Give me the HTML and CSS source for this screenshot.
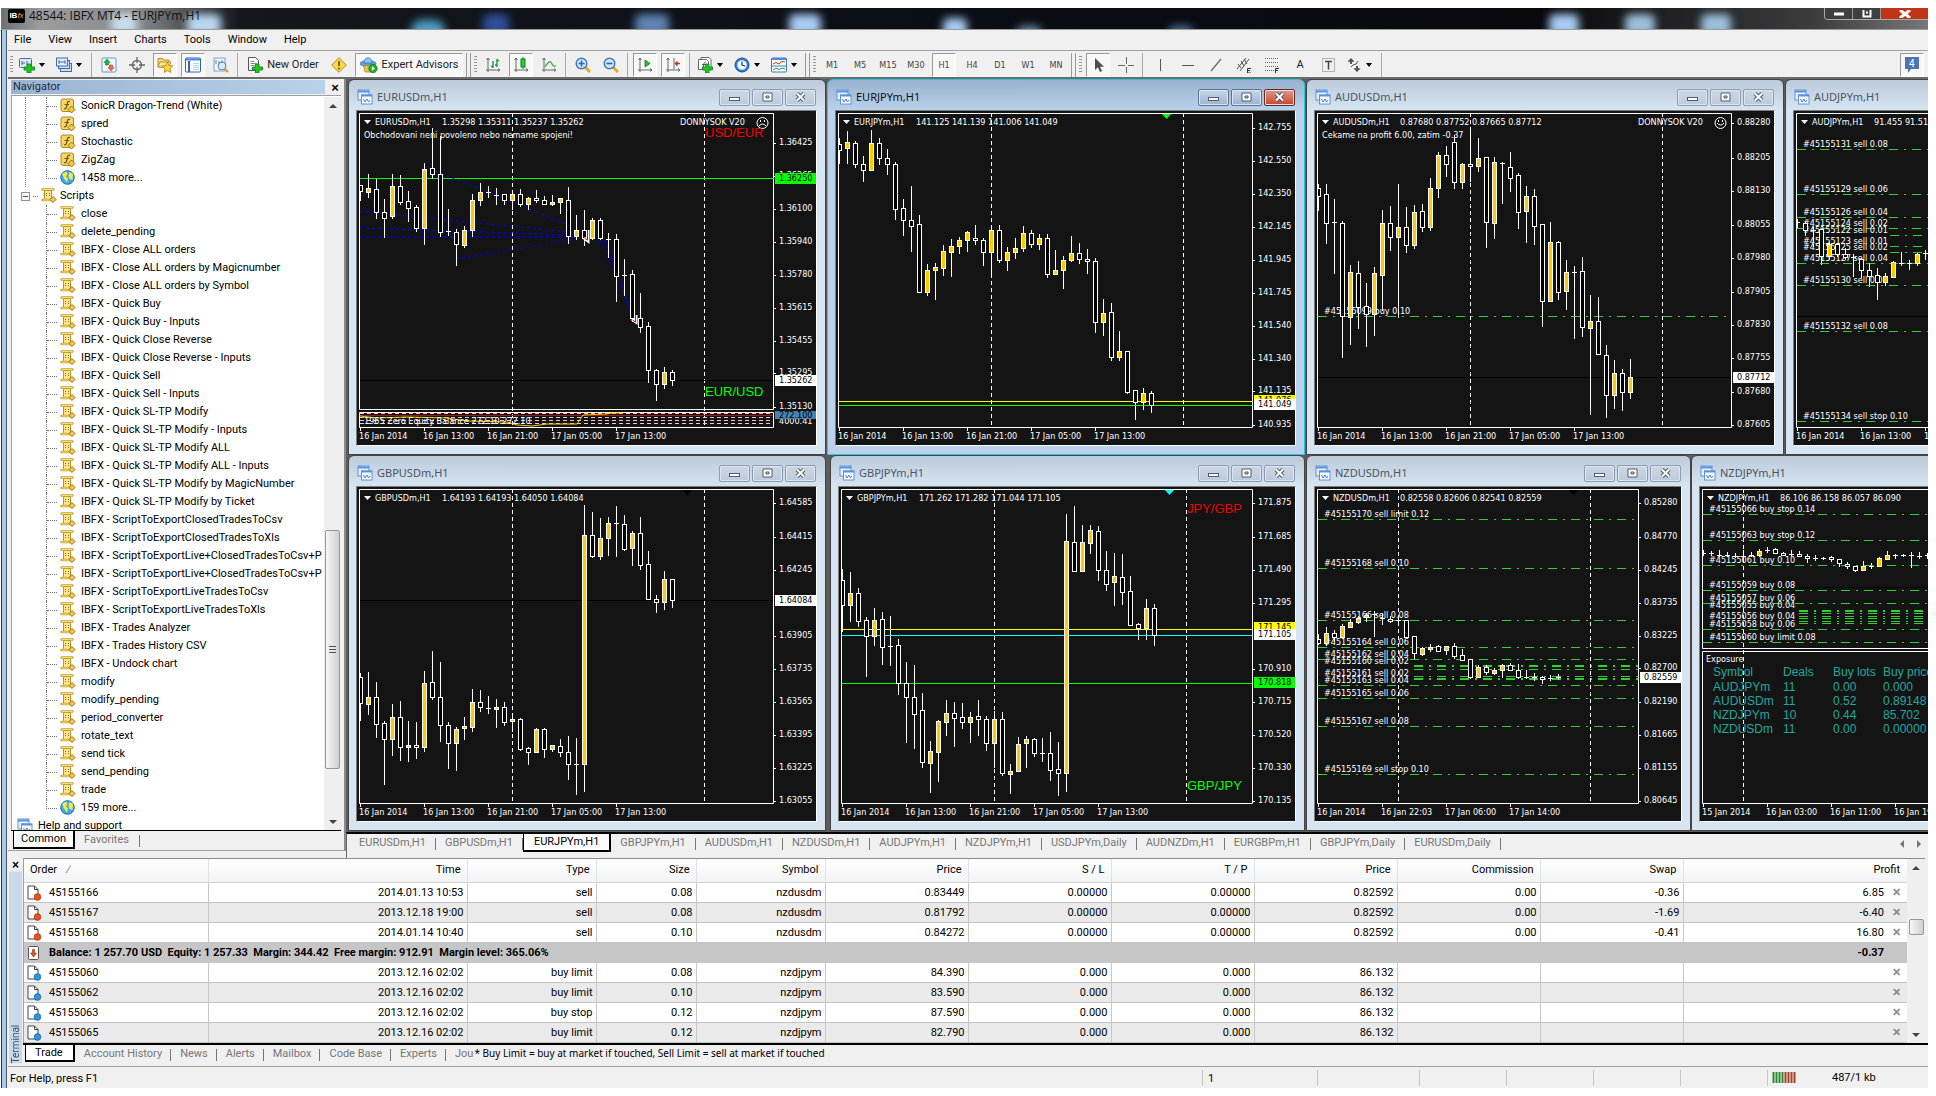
FILE: index.html
```
<!DOCTYPE html>
<html lang="en">
<head>
<meta charset="utf-8">
<title>48544: IBFX MT4 - EURJPYm,H1</title>
<link rel="stylesheet" href="styles.css">
</head>
<body>
<svg class="defs" width="0" height="0" aria-hidden="true">
  <defs>
    <symbol id="i-chartwin" viewBox="0 0 16 16"><rect x="1" y="1" width="11" height="10" fill="#e8f2fd" stroke="#5a93dc"/><path d="M1 2.500h11" stroke="#5a93dc" stroke-width="2"/><rect x="4.500" y="6" width="10.500" height="9" fill="#fff" stroke="#5a93dc"/><path d="M4 6.500h11" stroke="#5a93dc" stroke-width="2"/><path d="M6.500 10l1.500 3 2-3 1.500 3 1.500-2" fill="none" stroke="#3d7fd2"/></symbol>
    <symbol id="i-new" viewBox="0 0 16 16"><rect x=".5" y="1.500" width="12" height="9" rx="1" fill="#dfeaf8" stroke="#3f6fa8"/><path d="M3 8V4M3 6h3M8 4v4" stroke="#3f6fa8" fill="none"/><path d="M8 7h4v3h4v3h-4v3H8v-3H5v-3h3z" fill="#22c322" stroke="#0a7d12" stroke-width=".8"/></symbol>
    <symbol id="i-profiles" viewBox="0 0 16 16"><rect x="4.500" y="6.500" width="11" height="8" fill="#cfe0f5" stroke="#3f6fa8"/><rect x="2.500" y="3.500" width="11" height="8" fill="#cfe0f5" stroke="#3f6fa8"/><rect x=".5" y="1" width="11" height="8" fill="#e6f0fb" stroke="#3f6fa8"/><path d="M3 7V3M3 5h6M9 3v4" stroke="#3f6fa8" fill="none"/></symbol>
    <symbol id="i-market" viewBox="0 0 16 16"><rect x="1" y="1" width="14" height="14" rx="1" fill="#f3f8ff" stroke="#5f97d6"/><path d="M6 2l3 3.500H7.500V8h-3V5.500H3z" fill="#25b43a" stroke="#0b7a20" stroke-width=".6"/><path d="M10 14l3-3.500h-1.500V8h-3v2.500H7z" fill="#f07040" stroke="#b8371a" stroke-width=".6"/></symbol>
    <symbol id="i-target" viewBox="0 0 16 16"><circle cx="8" cy="8" r="4.500" fill="none" stroke="#666" stroke-width="1.400"/><path d="M8 0v6M8 10v6M0 8h6M10 8h6" stroke="#666" stroke-width="1.300"/></symbol>
    <symbol id="i-favs" viewBox="0 0 16 16"><path d="M1 3V1.500h5L7 3h5v7H1z" fill="#f6d873" stroke="#b8922a"/><path d="M1 10l2-5h11l-2 5z" fill="#fbe79c" stroke="#b8922a"/><path d="M10.500 5l1.600 3.500 3.700.4-2.700 2.600.7 3.900-3.300-1.900-3.300 1.900.7-3.900-2.700-2.600 3.700-.4z" fill="#ffd23e" stroke="#b07f10" stroke-width=".8"/></symbol>
    <symbol id="i-navi" viewBox="0 0 16 16"><rect x=".5" y="1" width="15" height="14" rx="1" fill="#fff" stroke="#2f66ad"/><path d="M1 2.500h14" stroke="#4c8be0" stroke-width="2"/><path d="M4 4v11" stroke="#2f66ad" stroke-width="2"/><path d="M8 6.500h6M8 8.500h6M8 10.500h6M8 12.500h6" stroke="#b9cfe8"/></symbol>
    <symbol id="i-tester" viewBox="0 0 16 16"><rect x="1" y="1" width="11" height="13" fill="#f0f6fd" stroke="#7fa3cc"/><path d="M3 7V3M6 9V4M9 6V3" stroke="#4f7fb8"/><circle cx="9" cy="9" r="4" fill="#d4e8fa" fill-opacity=".8" stroke="#4d86c3"/><path d="M12 12l3 3" stroke="#e0a020" stroke-width="2.400"/></symbol>
    <symbol id="i-order" viewBox="0 0 16 16"><path d="M1.500 .5h7l3 3v10h-10z" fill="#fff" stroke="#555"/><path d="M3.500 4.500h4M3.500 6.500h6M3.500 8.500h4" stroke="#888"/><path d="M8.500 7h3.500v3h3.500v3H12v3H8.500v-3H5.500v-3h3z" fill="#22c322" stroke="#0a7d12" stroke-width=".8"/></symbol>
    <symbol id="i-warn" viewBox="0 0 16 16"><path d="M8 .7L15.300 8 8 15.300 .7 8z" fill="#ffd84a" stroke="#b58a14"/><path d="M8 4v5M8 10.500v2" stroke="#6b4b00" stroke-width="1.600"/></symbol>
    <symbol id="i-expert" viewBox="0 0 18 16"><ellipse cx="8" cy="6.500" rx="8" ry="3" fill="#5aa0de" stroke="#2a69aa" stroke-width=".7"/><path d="M4 6c0-7 8-7 8 0z" fill="#8fc6f2" stroke="#2a69aa" stroke-width=".7"/><path d="M3.500 8.500h9L11 15H5z" fill="#e8c24a" stroke="#a8831d" stroke-width=".7"/><circle cx="13" cy="11.500" r="4.200" fill="#1eae2c" stroke="#0a7416" stroke-width=".7"/><path d="M11.800 9.300l3.200 2.200-3.200 2.200z" fill="#fff"/></symbol>
    <symbol id="i-bars" viewBox="0 0 16 16"><path d="M3 1v14M1 13h14M1.500 3L3 1l1.500 2M13 11.500l2 1.500-2 1.500" stroke="#666" fill="none"/><path d="M8 4v7M8 9.500H6M12 2v8M12 3.500h2M12 8h-2" stroke="#1a9a2a" stroke-width="1.400"/></symbol>
    <symbol id="i-candles" viewBox="0 0 16 16"><path d="M3 1v14M1 13h14M1.500 3L3 1l1.500 2M13 11.500l2 1.500-2 1.500" stroke="#666" fill="none"/><path d="M10 0v12" stroke="#0a7d12"/><rect x="8" y="2" width="4" height="8" fill="#27d03b" stroke="#0a7d12"/></symbol>
    <symbol id="i-line" viewBox="0 0 16 16"><path d="M3 1v14M1 13h14M1.500 3L3 1l1.500 2M13 11.500l2 1.500-2 1.500" stroke="#666" fill="none"/><path d="M4 10c4-7 6-6 7-3s2 2 4 2" fill="none" stroke="#3fae4c" stroke-width="1.300"/></symbol>
    <symbol id="i-zoomin" viewBox="0 0 16 16"><path d="M10 10l5 5" stroke="#e0ab2c" stroke-width="3"/><circle cx="6.500" cy="6.500" r="5.300" fill="#cfe5fa" stroke="#3c79bd" stroke-width="1.400"/><path d="M3.500 6.500h6M6.500 3.500v6" stroke="#2867b2" stroke-width="1.600"/></symbol>
    <symbol id="i-zoomout" viewBox="0 0 16 16"><path d="M10 10l5 5" stroke="#e0ab2c" stroke-width="3"/><circle cx="6.500" cy="6.500" r="5.300" fill="#cfe5fa" stroke="#3c79bd" stroke-width="1.400"/><path d="M3.500 6.500h6" stroke="#2867b2" stroke-width="1.600"/></symbol>
    <symbol id="i-scroll" viewBox="0 0 16 16"><path d="M3 1v14M1 13h14M1.500 3L3 1l1.500 2M13 11.500l2 1.500-2 1.500" stroke="#666" fill="none"/><path d="M8 3l5 3.500L8 10z" fill="#28c03a" stroke="#0a7d12" stroke-width=".8"/></symbol>
    <symbol id="i-shift" viewBox="0 0 16 16"><path d="M3 1v14M1 13h14M1.500 3L3 1l1.500 2M13 11.500l2 1.500-2 1.500M9 1v11" stroke="#666" fill="none"/><path d="M15 6.500h-4M12.500 4.500l-2 2 2 2" stroke="#c03a10" stroke-width="1.500" fill="none"/></symbol>
    <symbol id="i-indic" viewBox="0 0 16 16"><path d="M4 2.500V.5h8l2 2V11h-2M1.500 2.500h8l2 2v8h-10z" fill="#fff" stroke="#666"/><path d="M6 11c1-5 1-6 3-6M5 7.500h3.500" stroke="#555" fill="none"/><path d="M8.500 7h3.500v3h3.500v3H12v3H8.500v-3H5.500v-3h3z" fill="#22c322" stroke="#0a7d12" stroke-width=".8"/></symbol>
    <symbol id="i-clock" viewBox="0 0 16 16"><circle cx="8" cy="8" r="7" fill="#2f7ed0" stroke="#174f94"/><circle cx="8" cy="8" r="4.800" fill="#eef6ff"/><path d="M8 4.500V8l3 1" fill="none" stroke="#1d3f6b" stroke-width="1.200"/></symbol>
    <symbol id="i-templ" viewBox="0 0 16 16"><rect x=".5" y="1" width="15" height="14" rx="1" fill="#fff" stroke="#3c79bd"/><path d="M1 2h14" stroke="#4c8be0" stroke-width="2"/><path d="M1 9h14" stroke="#3c79bd"/><path d="M2 7l3-1.500L8 7l3-2.500 3 .5" stroke="#b23a20" fill="none"/><path d="M2 13l3-2 3 1.500 3-1.500 3 1" stroke="#1f9a35" fill="none"/></symbol>
    <symbol id="i-cursor" viewBox="0 0 16 16"><path d="M5 1v12l3-2.700L10 15l2-1-2-4.300h4z" fill="#4d4d4d"/></symbol>
    <symbol id="i-cross" viewBox="0 0 16 16"><path d="M8.500 0v7M8.500 10v6M0 8.500h7M10 8.500h6" stroke="#666"/></symbol>
    <symbol id="i-vl" viewBox="0 0 16 16"><path d="M8.500 2v12" stroke="#555"/></symbol>
    <symbol id="i-hl" viewBox="0 0 16 16"><path d="M2 8.500h12" stroke="#555"/></symbol>
    <symbol id="i-tl" viewBox="0 0 16 16"><path d="M3 14L13 2" stroke="#666" stroke-width="1.200"/></symbol>
    <symbol id="i-chan" viewBox="0 0 16 16"><path d="M1 12L10 1M4 14L13 2M2 7l3 4M5 4l3 5M8 2l3 5" stroke="#555" fill="none"/><path d="M15 11.500h-3.500V16H15M11.500 13.500H14" stroke="#333" fill="none"/></symbol>
    <symbol id="i-fibo" viewBox="0 0 16 16"><path d="M1 1.500h14M1 5.500h14M1 9.500h14M1 13.500h9" stroke="#666" stroke-dasharray="1 1"/><path d="M15 11.500h-3.500V16M11.500 13.500H14" stroke="#333" fill="none"/></symbol>
    <symbol id="i-label" viewBox="0 0 16 16"><rect x="2.500" y="1.500" width="12" height="13" fill="none" stroke="#777" stroke-dasharray="1 1"/><path d="M5 4.500h7M8.500 4.500v8" stroke="#444" stroke-width="1.500"/></symbol>
    <symbol id="i-arrows" viewBox="0 0 16 16"><path d="M5 1l3.500 3.500L6 5v2H4V5L1.500 4.500zM11 15l-3.500-3.500L10 11V9h2v2l2.500.5z" fill="#555"/><path d="M5 10l2-2 3-1 2-3" stroke="#555" fill="none"/></symbol>
    <symbol id="i-func" viewBox="0 0 16 16"><rect x="1" y="1" width="12.500" height="12.500" rx="2" fill="#f5d566" stroke="#b08a20"/><path d="M10 3.500c-3-1-2.500 2-3 4s-1 4-3 3M4.500 6.500h4.500" stroke="#6d5410" stroke-width="1.200" fill="none"/><path d="M11.500 8l3.500 3.500-3.500 3.500L8 11.500z" fill="#f3c844" stroke="#94731a"/></symbol>
    <symbol id="i-script" viewBox="0 0 16 16"><path d="M3.500 2.500h7v9h-7z" fill="#fbe68f" stroke="#b8942a"/><path d="M1.500 1.500h11M1.500 12h10" stroke="#c79f2c" stroke-width="2.400" stroke-linecap="round"/><path d="M2 1.500h10M2 12h9" stroke="#f9df7c" stroke-linecap="round"/><path d="M5 5.500h1M8 5.500h1M5 7.500h1M8 7.500h1" stroke="#8f701a"/><path d="M12 8.500l3 3-3 3-3-3z" fill="#f3c844" stroke="#94731a"/></symbol>
    <symbol id="i-globe" viewBox="0 0 16 16"><circle cx="7.500" cy="7.500" r="6.800" fill="#3fa9f0" stroke="#1c6bb5"/><path d="M2 4l4-2.500 1.500 2-1.500 3 2 2-1 4-3-4zM9.500 2l3.500 2-.5 6-3-1-1-3z" fill="#f7e93f"/></symbol>
    <symbol id="i-sell" viewBox="0 0 16 16"><path d="M2 1h6.500L12 4.500V14H2z" fill="#fff" stroke="#444"/><path d="M8.500 1v3.500H12" fill="none" stroke="#444"/><circle cx="11.500" cy="12" r="3.400" fill="#e8501e" stroke="#a53208" stroke-width=".6"/></symbol>
    <symbol id="i-buy" viewBox="0 0 16 16"><path d="M2 1h6.500L12 4.500V14H2z" fill="#fff" stroke="#444"/><path d="M8.500 1v3.500H12" fill="none" stroke="#444"/><circle cx="11.500" cy="12" r="3.400" fill="#2b93e0" stroke="#10599c" stroke-width=".6"/></symbol>
    <symbol id="i-bal" viewBox="0 0 16 16"><rect x="2.500" y="1.500" width="10" height="13" rx="1" fill="#fff" stroke="#555"/><path d="M7.500 12L4.500 8h2V4.500h2V8h2z" fill="#e8501e" stroke="#8c2b08" stroke-width=".6"/></symbol>
  </defs>
</svg>

<header class="caption">
  <span class="glow g1"></span><span class="glow g2"></span><span class="glow g3"></span><span class="glow g4"></span><span class="glow g5"></span><span class="glow g6"></span><span class="glow g7"></span><span class="glow g8"></span>
  <span class="logo"><b>IB</b><i>fx</i></span>
  <h1>48544: IBFX MT4 - EURJPYm,H1</h1>
  <div class="sysbtns">
    <button aria-label="Minimize"><svg width="10" height="4"><path d="M0 2h10" stroke="#fff" stroke-width="3"/></svg></button>
    <button aria-label="Restore"><svg width="10" height="8"><path d="M1.500 0v6.500h7V0M4 2.500h2" stroke="#fff" stroke-width="2" fill="none"/></svg></button>
    <button class="close" aria-label="Close"><svg width="12" height="8"><path d="M1 8l10-8M1 0l10 8" stroke="#fff" stroke-width="3"/></svg></button>
  </div>
</header>

<div class="frame">
  <nav class="menu">
    <button>File</button><button>View</button><button>Insert</button><button>Charts</button><button>Tools</button><button>Window</button><button>Help</button>
  </nav>

  <div class="toolbar" id="toolbar"></div>

  <div class="workspace">
    <aside class="navigator">
      <header><h2>Navigator</h2><button aria-label="Close navigator">×</button></header>
      <div class="treebox">
        <div class="tree" id="tree"></div>
        <div class="vscroll"><i class="up"></i><i class="thumb"></i><i class="down"></i></div>
      </div>
      <div class="tabs navtabs"><button class="on">Common</button><button>Favorites</button></div>
    </aside>
    <main class="charts">
      <div class="mdi" id="mdi"></div>
      <div class="tabs charttabs" id="charttabs"></div>
    </main>
  </div>

  <section class="terminal">
    <div class="side"><button aria-label="Close terminal">×</button><span>Terminal</span></div>
    <div class="termmain">
      <div class="tablewrap">
        <table>
          <colgroup><col class="c-order"><col class="c-time"><col class="c-type"><col class="c-size"><col class="c-sym"><col class="c-num"><col class="c-num"><col class="c-num"><col class="c-num"><col class="c-num"><col class="c-num"><col></colgroup>
          <thead><tr><th>Order <span class="sort">∕</span></th><th>Time</th><th>Type</th><th>Size</th><th>Symbol</th><th>Price</th><th>S / L</th><th>T / P</th><th>Price</th><th>Commission</th><th>Swap</th><th>Profit</th></tr></thead>
          <tbody id="orders"></tbody>
        </table>
        <div class="vscroll tscroll"><i class="up"></i><i class="thumb"></i><i class="down"></i></div>
      </div>
      <div class="tabs termtabs">
        <button class="on">Trade</button><button>Account History</button><button>News</button><button>Alerts</button><button>Mailbox</button><button>Code Base</button><button>Experts</button><button class="cut">Jou</button>
        <p>* Buy Limit = buy at market if touched, Sell Limit = sell at market if touched</p>
      </div>
    </div>
  </section>

  <footer class="status">
    <span class="help">For Help, press F1</span><span class="profile">1</span><span class="s1"></span><span class="s2"></span><span class="s2"></span><span class="s2"></span><span class="s2"></span>
    <span class="net"><svg width="24" height="11"><path d="M1.500 0v11M4.500 0v11M7.500 0v11M10.500 0v11" stroke="#2f8a2f" stroke-width="2"/><path d="M13.500 0v11M16.500 0v11M19.500 0v11M22.500 0v11" stroke="#a8402a" stroke-width="2"/></svg>487/1 kb</span>
  </footer>
</div>
<script src="app.js"></script>
</body>
</html>
```
FILE: styles.css
```
* { box-sizing: border-box; }
body { margin: 0; height: 100vh; padding: 8px 8px 8px 1px; display: flex; flex-direction: column; background: #fff; font: 11px/14px Roboto, "Liberation Sans", sans-serif; color: #000; overflow: hidden; }
button { font: inherit; color: inherit; background: none; border: 0; padding: 0; margin: 0; white-space: nowrap; }
h1, h2, p, ul { margin: 0; padding: 0; font-weight: normal; }
ul { list-style: none; }
svg { display: block; flex: none; }
.defs { position: absolute; }

/* caption */
.caption { position: relative; flex: none; height: 22px; display: flex; align-items: flex-start; gap: 4px; padding-left: 7px; overflow: hidden; background: linear-gradient(90deg, #6e7175 0, #9a9c9e 40px, #85888b 140px, #3a3d41 200px, #14181d 240px, #0a0e15 50%, #07090d 80%, #3a3c3e 94%, #777 100%); border-bottom: 1px solid #9a9a9a; }
.caption h1 { position: relative; font: 12px/16px "Open Sans", "Liberation Sans", sans-serif; color: #111; }
.logo { position: relative; width: 17px; height: 14px; margin-top: 1px; background: #000; font: 8px/14px "Liberation Sans", sans-serif; color: #fff; text-align: center; white-space: nowrap; border-radius: 2px; }
.logo i { color: #f0b020; }
.sysbtns { position: relative; display: flex; margin-left: auto; height: 12px; border: 1px solid #aaa; border-top: 0; border-right: 0; border-radius: 0 0 0 4px; overflow: hidden; }
.sysbtns button { width: 28px; height: 11px; display: flex; align-items: center; justify-content: center; background: #3c4043; border-right: 1px solid #999; }
.sysbtns .close { width: 47px; background: #c03518; border: 0; }
.glow { position: absolute; top: 6px; width: 26px; height: 22px; border-radius: 6px; background: #a9cdf0; filter: blur(4px); }
.g1 { left: 110px; top: 5px; background: #c8dcec; }
.g2 { left: 186px; width: 34px; background: #b8d8f0; }
.g3 { left: 410px; width: 34px; top: 12px; background: #4f9fc8; border-radius: 18px; }
.g4 { left: 482px; background: #2f4f9a; }
.g5 { left: 634px; width: 34px; background: #5e84b4; }
.g6 { left: 788px; width: 32px; background: #a8ccf4; }
.g7 { left: 942px; width: 24px; top: 10px; background: #a8ccf4; box-shadow: 74px 8px 0 #6d8fb0, 226px 8px 0 #5078a0; }
.g8 { left: 1548px; width: 30px; background: #a8ccf4; box-shadow: 76px 0 0 #9cc0dc, 152px 0 0 #9cc0dc; }

/* window frame */
.frame { flex: 1; min-height: 0; display: flex; flex-direction: column; border-left: 7px solid #a9c8ea; border-image: linear-gradient(90deg, #23303f 0 1px, #a9c8ea 1px 5px, #44566b 5px 6px, #e8f0f8 6px) 7; background: #f0f0f0; border-width: 0 0 0 7px; }
.menu { flex: none; height: 21px; display: flex; align-items: center; padding-left: 6px; gap: 17px; border-bottom: 1px solid #a0a0a0; background: #f0f0f0; }
.toolbar { flex: none; height: 28px; display: flex; align-items: stretch; border-bottom: 2px solid #6b6b6b; color: #222; padding: 2px 2px 0 0; }
.toolbar button { flex: none; width: 28px; padding: 0 2px; display: flex; align-items: center; justify-content: center; }
.toolbar button > span { display: flex; align-items: center; justify-content: center; width: 24px; height: 24px; }
.toolbar .pressed > span { border: 1px solid #999; border-right-color: #fff; border-bottom-color: #fff; background: #f8f8f8; }
.toolbar .drop { width: 37px; padding: 0 0 0 4px; gap: 4px; justify-content: flex-start; }
.toolbar .drop::after { content: ""; border: 3px solid transparent; border-top: 4px solid #000; border-bottom: 0; }
.toolbar .drop > span { width: 16px; }
.toolbar .text > span { width: auto; gap: 4px; padding: 0 4px; }
.toolbar .neworder { width: 84px; }
.toolbar .experts { width: 112px; }
.toolbar .tf { font: 9px/12px "DejaVu Sans Condensed", "Liberation Sans", sans-serif; color: #444; }
.grip { width: 7px; padding: 3px 2px; }
.grip::before { content: ""; display: block; width: 3px; height: 18px; background: repeating-linear-gradient(#999 0 1px, #f0f0f0 1px 3px); }
.sep { border-left: 1px solid #a8a8a8; margin-left: 2px; width: 4px; }
.endline { width: 5px; border-left: 1px solid #999; border-right: 1px solid #999; margin: 0 1px; }
.notify { margin-left: auto; }
.workspace { flex: 1; min-height: 0; display: flex; }

/* navigator */
.navigator { flex: none; width: 338px; padding: 1px 3px 0 3px; margin-bottom: 7px; display: flex; flex-direction: column; border-bottom: 1px solid #a0a0a0; border-right: 2px solid #8a8a8a; }
.navigator header { flex: none; height: 14px; display: flex; }
.navigator h2 { flex: 1; padding-left: 2px; font-size: 11px; line-height: 14px; color: #1b2a3c; background: linear-gradient(90deg, #99b4d1, #b9d1ea); }
.navigator header button { width: 16px; font: bold 13px/13px "Liberation Sans", sans-serif; padding-left: 4px; }
.treebox { flex: 1; min-height: 0; display: flex; margin-top: 1px; padding-top: 1px; border: 1px solid #a0a0a0; border-width: 1px 0 0 1px; background: #fff; }
.tree { flex: 1; min-width: 0; overflow: hidden; white-space: nowrap; }
.tree li, .root { display: flex; align-items: center; height: 18px; }
.level1 { margin-left: 13px; border-left: 1px dotted #777; }
.branch { margin-left: 34px; }
.level1 .branch { margin-left: 20px; }
.branch li { border-left: 1px dotted #777; gap: 5px; }
.branch li::before { content: ""; width: 10px; height: 9px; align-self: flex-start; border-bottom: 1px dotted #777; margin-right: -2px; }
.branch li:last-child { border-left: 0; }
.branch li:last-child::before { width: 10px; border-left: 1px dotted #777; }
.root { gap: 3px; padding-left: 9px; }
.root.help { padding-left: 5px; gap: 5px; }
.root .box { width: 9px; height: 9px; border: 1px solid #8a94a0; background: linear-gradient(#3a4a8a, #3a4a8a) center / 5px 1px no-repeat #fff; }
.root .dots { width: 5px; border-top: 1px dotted #777; }
.vscroll { flex: none; width: 17px; display: flex; flex-direction: column; align-items: center; background: #efefef; }
.vscroll .up, .vscroll .down { flex: none; border: 4px solid transparent; }
.vscroll .up { border-bottom-color: #444; border-top: 0; margin: 7px 0 6px; }
.vscroll .down { border-top-color: #444; border-bottom: 0; margin: 6px 0; }
.vscroll .thumb { width: 15px; border: 1px solid #999; border-radius: 2px; background: repeating-linear-gradient(#555 0 1px, transparent 1px 3px) center / 7px 7px no-repeat, linear-gradient(90deg, #f8f8f8, #cfcfcf); }
.treebox .thumb { height: 239px; margin-top: 416px; }
.treebox .down { margin-top: auto; }
.tabs { display: flex; flex: none; color: #767676; }
.tabs button { position: relative; height: 18px; }
.tabs button::after { content: ""; position: absolute; right: 0; top: 4px; height: 12px; border-right: 1px solid #777; }
.tabs .on { color: #000; background: #fff; border: 1px solid #000; border-top: 0; border-width: 0 2px 2px 1px; }
.tabs .on::after { display: none; }
.navtabs { height: 20px; padding-left: 2px; border-top: 1px solid #000; }
.navtabs button { padding: 0 11px 0 9px; }
.navtabs .on { padding: 0 7px; }

/* chart windows */
.charts { flex: 1; min-width: 0; display: flex; flex-direction: column; }
.mdi { flex: 1; position: relative; overflow: hidden; background: #5c5c5c; }
.win { position: absolute; display: flex; flex-direction: column; height: 376px; padding: 0 8px 8px 7px; border: 1px solid #444; border-radius: 6px 6px 0 0; background: linear-gradient(#bccad9, #d7e4f2 30px, #d7e4f2); }
.win.active { background: linear-gradient(#98b2cf, #bad1eb 30px, #bad1eb); border-color: #2cc4d8; }
.win header { flex: none; height: 30px; display: flex; align-items: center; gap: 4px; padding: 4px 1px 0; font: 11px/16px "Noto Sans", "Liberation Sans", sans-serif; color: #4b5663; }
.win.active header { color: #111; }
.win header h3 { flex: 1; margin: 0; font: inherit; }
.win header button { flex: none; width: 31px; height: 17px; margin-left: -2px; display: flex; align-items: center; justify-content: center; border: 1px solid #8e9db2; border-radius: 2px; background: linear-gradient(#cbd7e4, #bccbdc); box-shadow: inset 0 0 0 1px #dbe5f0; }
.win.active header button { border-color: #5e7390; background: linear-gradient(#c6d7ea, #9cb4d0); }
.win.active header .x { background: linear-gradient(#e19a8c, #c5452d); border-color: #6b2a20; }
.client { flex: none; border: 1px solid; border-color: #7c7c7c #fff #fff #7c7c7c; background: #141414; overflow: hidden; }
.client text { font: 9px "DejaVu Sans Condensed", "Liberation Sans", sans-serif; fill: #fff; white-space: pre; }
.client text.big { font: 13px "Liberation Sans", sans-serif; }
.client text.mid { font: 12px "Liberation Sans", sans-serif; fill: #20a8a0; }
.client text.k { fill: #000; }
.charttabs { height: 26px; padding-left: 3px; border-top: 2px solid #000; border-left: 1px solid #666; position: relative; }
.charttabs button { padding: 0 10px 0 9px; }
.charttabs .on { padding-left: 10px; }
.tabarrows { margin-left: auto; display: flex; gap: 13px; padding: 6px 7px 0 0; }
.tabarrows i { width: 4px; height: 8px; border: 4px solid transparent; border-right: 4px solid #777; border-left: 0; }
.tabarrows i + i { border-right: 0; border-left: 4px solid #777; }

/* terminal */
.terminal { flex: none; display: flex; border-bottom: 1px solid #a0a0a0; padding-bottom: 3px; }
.side { flex: none; width: 15px; display: flex; flex-direction: column; align-items: center; }
.side button { flex: none; height: 14px; font: bold 12px/12px "Liberation Sans", sans-serif; }
.side span { flex: 1; width: 13px; writing-mode: vertical-rl; transform: rotate(180deg); font-size: 10px; line-height: 13px; color: #3d4f66; background: #c9d9ea; }
.termmain { flex: 1; min-width: 0; }
.tablewrap { display: flex; border-top: 1px solid #8a8a8a; border-left: 1px solid #a0a0a0; background: #fff; margin-right: 3px; }
table { flex: 1; width: 0; border-collapse: collapse; table-layout: fixed; }
.c-order { width: 184px; } .c-time { width: 259px; } .c-type { width: 129px; } .c-size { width: 100px; } .c-sym { width: 129px; } .c-num { width: 143px; }
th { height: 24px; padding: 0 6px; font-weight: normal; text-align: right; background: linear-gradient(#fff, #f2f3f5); border-right: 1px solid #dfe2e6; border-bottom: 1px solid #d0d3d8; }
th:first-child { text-align: left; }
th:last-child { padding-right: 7px; }
.sort { color: #777; margin-left: 8px; }
td { height: 20px; padding: 0 3px; text-align: right; border-right: 1px solid #c8c8c8; border-bottom: 1px solid #c4c4c4; white-space: nowrap; line-height: 14px; }
th:last-child, td:last-child { border-right: 0; }
td:first-child { padding-left: 2px; }
td:first-child > span { display: flex; align-items: center; gap: 7px; }
tr.alt td { background: #eaeaea; }
tr.balance td { background: #c6c6c6; border-color: #c6c6c6; font-weight: bold; }
td:last-child span { color: #8a8a8a; font-weight: bold; margin-left: 8px; }
td:last-child { padding-right: 6px; }
tr.balance td:last-child { padding-right: 23px; }
.tscroll { width: 18px; }
.tscroll .thumb { height: 16px; margin-top: 43px; background: linear-gradient(90deg, #f8f8f8, #cfcfcf); }
.tscroll .down { margin-top: auto; margin-bottom: 6px; }
.termtabs { height: 20px; padding-left: 2px; border-top: 2px solid #000; }
.termtabs button { padding: 0 9px; height: 17px; }
.termtabs .on { padding: 0 10px 0 9px; }
.termtabs .cut { padding-right: 0; }
.termtabs .cut::after { display: none; }
.termtabs p { font: 10px/17px "Noto Sans", "Liberation Sans", sans-serif; color: #000; margin-left: 1px; white-space: nowrap; }

/* status bar */
.status { flex: none; height: 21px; display: flex; align-items: center; background: #f0f0f0; }
.status > span { height: 16px; line-height: 18px; border-left: 1px solid #c6c6c6; }
.status .help { flex: 1; border: 0; padding-left: 2px; }
.status .profile { width: 115px; padding-left: 5px; }
.status .s1 { width: 102px; }
.status .s2 { width: 87px; }
.status .net { width: 161px; display: flex; align-items: center; gap: 36px; padding-left: 4px; }
```
FILE: app.js
```
const use = (id, w = 16) => `<svg width="${w}" height="16" aria-hidden="true"><use href="#i-${id}"/></svg>`;

/* ---- toolbar ---- */
const B = (id, o = '') => `<button class="${o}" aria-label="${id}"><span>${use(id)}</span></button>`;
const sep = '<i class="sep"></i>', grip = '<i class="grip"></i>', end = '<i class="endline"></i>';
document.getElementById('toolbar').innerHTML =
  grip + B('new', 'drop') + B('profiles', 'drop') + sep + B('market') + B('target') + B('favs', 'pressed') + B('navi', 'pressed') + B('tester') + sep +
  `<button class="text neworder"><span>${use('order')}New Order</span></button>` + B('warn') +
  `<button class="text experts pressed"><span>${use('expert', 18)}Expert Advisors</span></button>` + end + grip +
  B('bars') + B('candles', 'pressed') + B('line') + sep + B('zoomin') + B('zoomout') + sep + B('scroll', 'pressed') + B('shift', 'pressed') + sep +
  B('indic', 'drop') + B('clock', 'drop') + B('templ', 'drop') + end + grip +
  ['M1', 'M5', 'M15', 'M30', 'H1', 'H4', 'D1', 'W1', 'MN'].map(t => `<button class="tf ${t === 'H1' ? 'pressed' : ''}"><span>${t}</span></button>`).join('') +
  end + grip + B('cursor', 'pressed') + B('cross') + sep + B('vl') + B('hl') + B('tl') + B('chan') + B('fibo') +
  '<button><span>A</span></button>' + B('label') + B('arrows', 'drop') + sep +
  `<button class="notify pressed" aria-label="Messages"><span><svg width="20" height="20"><path d="M3 2h14v12H9l-3 4v-4H3z" fill="#4f74ae"/><text x="7" y="12" font-size="10" font-family="Roboto" fill="#fff">4</text></svg></span></button>`;

/* ---- navigator tree ---- */
const li = (icon, t) => `<li>${use(icon, 16)}${t}</li>`;
const scripts = ['close', 'delete_pending', 'IBFX - Close ALL orders', 'IBFX - Close ALL orders by Magicnumber', 'IBFX - Close ALL orders by Symbol', 'IBFX - Quick Buy', 'IBFX - Quick Buy - Inputs', 'IBFX - Quick Close Reverse', 'IBFX - Quick Close Reverse - Inputs', 'IBFX - Quick Sell', 'IBFX - Quick Sell - Inputs', 'IBFX - Quick SL-TP Modify', 'IBFX - Quick SL-TP Modify - Inputs', 'IBFX - Quick SL-TP Modify ALL', 'IBFX - Quick SL-TP Modify ALL - Inputs', 'IBFX - Quick SL-TP Modify by MagicNumber', 'IBFX - Quick SL-TP Modify by Ticket', 'IBFX - ScriptToExportClosedTradesToCsv', 'IBFX - ScriptToExportClosedTradesToXls', 'IBFX - ScriptToExportLive+ClosedTradesToCsv+P', 'IBFX - ScriptToExportLive+ClosedTradesToCsv+P', 'IBFX - ScriptToExportLiveTradesToCsv', 'IBFX - ScriptToExportLiveTradesToXls', 'IBFX - Trades Analyzer', 'IBFX - Trades History CSV', 'IBFX - Undock chart', 'modify', 'modify_pending', 'period_converter', 'rotate_text', 'send tick', 'send_pending', 'trade'];
document.getElementById('tree').innerHTML =
  `<div class="level1"><ul class="branch">${['SonicR Dragon-Trend (White)', 'spred', 'Stochastic', 'ZigZag'].map(t => li('func', t)).join('')}${li('globe', '1458 more...')}</ul></div>` +
  `<div class="root"><i class="box"></i><i class="dots"></i>${use('script')}Scripts</div>` +
  `<ul class="branch">${scripts.map(t => li('script', t)).join('')}${li('globe', '159 more...')}</ul>` +
  `<div class="root help">${use('chartwin')}Help and support</div>`;

/* ---- chart tabs ---- */
document.getElementById('charttabs').innerHTML =
  ['EURUSDm,H1', 'GBPUSDm,H1', 'EURJPYm,H1', 'GBPJPYm,H1', 'AUDUSDm,H1', 'NZDUSDm,H1', 'AUDJPYm,H1', 'NZDJPYm,H1', 'USDJPYm,Daily', 'AUDNZDm,H1', 'EURGBPm,H1', 'GBPJPYm,Daily', 'EURUSDm,Daily']
    .map((t, i) => `<button class="${i === 2 ? 'on' : ''}">${t}</button>`).join('') + '<span class="tabarrows"><i></i><i></i></span>';

/* ---- orders ---- */
const orders = [
  ['45155166', '2014.01.13 10:53', 'sell', '0.08', 'nzdusdm', '0.83449', '0.00000', '0.00000', '0.82592', '0.00', '-0.36', '6.85'],
  ['45155167', '2013.12.18 19:00', 'sell', '0.08', 'nzdusdm', '0.81792', '0.00000', '0.00000', '0.82592', '0.00', '-1.69', '-6.40'],
  ['45155168', '2014.01.14 10:40', 'sell', '0.10', 'nzdusdm', '0.84272', '0.00000', '0.00000', '0.82592', '0.00', '-0.41', '16.80'],
  null,
  ['45155060', '2013.12.16 02:02', 'buy limit', '0.08', 'nzdjpym', '84.390', '0.000', '0.000', '86.132', '', '', ''],
  ['45155062', '2013.12.16 02:02', 'buy limit', '0.10', 'nzdjpym', '83.590', '0.000', '0.000', '86.132', '', '', ''],
  ['45155063', '2013.12.16 02:02', 'buy stop', '0.12', 'nzdjpym', '87.590', '0.000', '0.000', '86.132', '', '', ''],
  ['45155065', '2013.12.16 02:02', 'buy limit', '0.12', 'nzdjpym', '82.790', '0.000', '0.000', '86.132', '', '', '']];
document.getElementById('orders').innerHTML = orders.map((r, i) => r === null
  ? `<tr class="balance"><td colspan="11"><span>${use('bal')}Balance: 1 257.70 USD&nbsp; Equity: 1 257.33&nbsp; Margin: 344.42&nbsp; Free margin: 912.91&nbsp; Margin level: 365.06%</span></td><td>-0.37</td></tr>`
  : `<tr class="${i % 2 ? 'alt' : ''}">${r.map((c, j) => `<td>${j === 0 ? `<span>${use(r[2] === 'sell' ? 'sell' : 'buy')}${c}</span>` : j === 11 ? c + '<span>✕</span>' : c}</td>`).join('')}</tr>`).join('');

/* ---- charts ----
   Vertical values are thirds of a pixel, measured from `oy` above the client area.
   A candle is high,bodyTop,bodyBottom,low + y (up), b (down) or d (doji). */
const charts = [
 { t: 'EURUSDm', q: '1.35298 1.35311 1.35237 1.35262', x: 2, y: 0, w: 459, oy: 108, bottom: 1003, v: [155, 347], note: 'Obchodovani neni povoleno nebo nemame spojeni!', ea: 'sad',
   p: { 200: '1.36425', 300: '1.36265', 398: '1.36100', 497: '1.35940', 596: '1.35780', 695: '1.35615', 794: '1.35455', 892: '1.35295', 992: '1.35130' },
   lines: [[310, '#0f0'], [916, '#000']], tags: [[308, '1.36250', '#0f0'], [914, '1.35262', '#fff']], big: [[347, 172, 'USD/EUR', '#e00'], [347, 949, 'EUR/USD', '#0f0']],
   c: '330,330,348,378b 298,340,350,368y 312,342,412,432b 372,412,428,488b 298,332,424,432y 300,332,380,390b 348,378,398,440b 390,396,458,470b 264,282,458,510y 160,280,298,312b 182,298,470,486b 402,468,468,482d 462,470,508,572b 452,466,510,518y 358,374,466,486y 324,350,376,392y 334,350,350,368d 340,360,360,390d 358,358,374,390b 348,356,374,406y 342,356,388,396b 366,370,388,405y 345,370,376,384b 362,376,388,390b 360,380,388,392y 370,370,380,416y 336,374,482,506b 420,464,482,494y 405,464,490,512b 430,434,490,494y 430,434,490,494b 474,492,492,548d 477,493,602,680b 552,601,601,662d 585,598,730,742b 655,730,755,774b 742,754,886,924b 882,886,928,978b 876,892,928,942y 884,892,916,932b' },
 { t: 'EURJPYm', q: '141.125 141.139 141.006 141.049', x: 481, y: 0, w: 459, oy: 108, bottom: 1057, v: [155, 347], active: 1, mark: '#0f0',
   p: { 155: '142.755', 254: '142.550', 353: '142.350', 452: '142.145', 551: '141.945', 650: '141.745', 749: '141.540', 848: '141.340', 946: '141.135', 1046: '140.935' },
   lines: [[979, '#ff0'], [991, '#0f0']], tags: [[974, '141.076', '#ff0'], [988, '141.049', '#fff']],
   c: '190,208,224,268b 168,202,220,266y 198,205,268,278b 243,268,284,320b 166,205,284,284y 190,205,250,270b 222,250,268,300b 262,268,402,434b 372,400,434,482b 333,434,452,530b 420,448,650,650b 568,586,650,662y 564,576,586,674y 510,529,578,602y 492,514,530,606y 486,496,514,536y 468,472,496,530y 450,490,496,510b 490,496,530,572b 450,466,530,610y 450,466,556,564b 516,530,556,588y 489,520,530,552y 453,475,520,530y 465,475,506,518b 478,490,506,524y 478,490,596,608b 525,586,596,600y 543,556,586,642y 484,535,556,560y 504,535,553,566b 522,553,559,598b 548,559,742,774b 672,715,742,782y 685,712,845,858b 768,829,845,858y 829,829,950,956b 946,946,982,1035b 939,955,982,1004y 948,955,991,1014b' },
 { t: 'AUDUSDm', q: '0.87680 0.87752 0.87665 0.87712', x: 960, y: 0, w: 459, oy: 108, bottom: 1057, v: [155, 347], note: 'Cekame na profit 6.00, zatim -0.37', ea: 'smile',
   p: { 142: '0.88280', 245: '0.88205', 344: '0.88130', 446: '0.88055', 545: '0.87980', 647: '0.87905', 746: '0.87830', 846: '0.87755', 948: '0.87680', 1046: '0.87605' },
   lines: [[907, '#000']], tags: [[905, '0.87712', '#fff']], o: [[707, '#45155099 buy 0.10']], 
   c: '327,340,362,408b 327,358,444,507b 372,442,442,597d 438,445,724,850b 570,591,725,810y 558,595,697,762b 624,694,716,816b 576,595,716,782y 405,445,599,708y 393,445,486,528b 327,457,486,728y 396,457,509,533b 390,412,509,521y 387,408,455,470b 309,338,455,467y 231,241,338,369y 212,241,266,305b 180,202,320,342b 264,268,320,342y 168,268,274,320b 189,250,272,290y 247,247,440,519b 245,262,443,492y 262,264,264,387d 231,277,308,351b 294,300,410,461b 333,364,407,504y 342,364,452,510b 448,448,677,755b 441,502,677,677y 498,502,650,674b 555,590,647,705y 573,590,592,792d 546,588,755,786b 660,737,758,1020y 666,737,838,838b 810,841,959,1029b 855,895,959,1002y 882,895,950,1008b 852,907,950,972y' },
 { t: 'AUDJPYm', q: '91.455 91.512 91.402 91.480', x: 1439, y: 0, w: 459, oy: 108, bottom: 1057, v: [155, 347], p: {}, lines: [[724, '#000']],
   o: [[206, '#45155131 sell 0.08'], [341, '#45155129 sell 0.06'], [410, '#45155126 sell 0.04'], [443, '#45155124 sell 0.02'], [465, '#45155122 sell 0.01', 96], [497, '#45155123 sell 0.01', 96], [515, '#45155125 sell 0.02', 96], [548, '#45155127 sell 0.04'], [614, '#45155130 sell 0.06'], [752, '#45155132 sell 0.08'], [1022, '#45155134 sell stop 0.10']],
   c: '432,442,444,460d 440,445,465,482b 455,465,465,515d 460,463,542,570b 500,508,542,555y 505,508,536,545b 520,536,545,555b 537,545,545,607d 550,552,586,608b 565,586,602,636b 580,600,620,675b 595,604,620,632y 558,560,606,608y 532,563,565,574d 555,564,564,584d 533,536,564,572y 525,533,536,555d' },
 { t: 'GBPUSDm', q: '1.64193 1.64193 1.64050 1.64084', x: 2, y: 376, w: 459, oy: 111, bottom: 1060, v: [155, 347], mark: '#000',
   p: { 157: '1.64585', 257: '1.64415', 356: '1.64245', 554: '1.63905', 653: '1.63735', 752: '1.63565', 851: '1.63395', 950: '1.63225', 1049: '1.63055' },
   lines: [[451, '#000']], tags: [[449, '1.64084', '#fff']],
   c: '668,680,760,812b 666,740,762,795y 697,740,822,864b 812,820,868,1005b 762,802,868,918y 753,802,892,933b 812,886,892,936y 816,886,892,927b 663,698,892,906y 603,697,740,750b 636,740,826,876b 816,826,878,957b 832,836,878,963y 800,829,835,870y 717,755,830,846y 720,757,772,786b 738,773,773,792d 747,772,778,834y 757,772,815,828b 790,808,814,845y 804,808,896,903b 890,895,905,945b 835,836,905,909y 834,838,898,924b 886,886,898,906y 867,889,907,920b 858,907,943,990b 864,943,943,1035d 165,256,943,1026y 186,256,317,324b 204,265,317,330y 201,220,265,318y 168,220,220,321d 195,223,296,302b 243,250,293,348y 201,250,344,360b 303,343,446,450b 435,446,455,489b 363,388,455,480y 388,388,451,474b' },
 { t: 'GBPJPYm', q: '171.262 171.282 171.044 171.105', x: 484, y: 376, w: 456, oy: 111, bottom: 1060, v: [155, 347], mark: '#0ff',
   p: { 157: '171.875', 257: '171.685', 356: '171.490', 455: '171.295', 653: '170.910', 752: '170.715', 851: '170.520', 950: '170.330', 1049: '170.135' },
   lines: [[536, '#ff0'], [556, '#0ff'], [700, '#0f0']], tags: [[532, '171.145', '#ff0'], [553, '171.105', '#fff'], [697, '170.818', '#0f0']], big: [[347, 175, 'JPY/GBP', '#e00'], [347, 1006, 'GBP/JPY', '#0f0']],
   c: '357,391,464,546b 366,430,466,516y 414,430,512,530b 501,511,559,681b 474,511,559,588y 486,508,590,645b 498,587,589,648d 567,586,698,735b 636,700,740,879b 645,740,791,897b 729,781,937,954b 873,904,938,1029y 810,814,905,996y 750,790,815,858y 756,790,803,891b 759,802,815,837b 786,802,815,879y 750,799,808,858b 798,808,878,903b 784,808,878,954y 786,808,970,978b 942,962,971,1032y 861,883,962,962y 858,868,880,954y 864,868,908,921b 864,908,910,936d 846,910,959,993b 876,958,968,1038b 192,274,968,1026y 168,277,364,366b 225,277,364,366y 225,241,278,312y 228,244,361,393b 303,361,401,423b 309,379,395,468y 312,382,425,465b 378,424,524,528b 519,523,533,570b 447,475,533,570y 462,475,556,588b' },
 { t: 'NZDUSDm', q: '0.82558 0.82606 0.82541 0.82559', x: 960, y: 376, w: 366, oy: 111, bottom: 1060, v: [83, 275], mark: '#000', times: ['16 Jan 2014', '16 Jan 22:03', '17 Jan 06:00', '17 Jan 14:00'],
   p: { 157: '0.85280', 257: '0.84770', 356: '0.84245', 455: '0.83735', 554: '0.83225', 652: '0.82700', 752: '0.82190', 851: '0.81665', 950: '0.81155', 1049: '0.80645' },
   lines: [[682, '#000']], tags: [[680, '0.82559', '#fff']], dense: [646, 658, 679, 688],
   o: [[191, '#45155170 sell limit 0.12'], [338, '#45155168 sell 0.10'], [494, '#45155166 sell 0.08'], [575, '#45155164 sell 0.06'], [611, '#45155162 sell 0.04'], [632, '#45155160 sell 0.02', 99], [668, '#45155161 sell 0.02', 99], [689, '#45155163 sell 0.04'], [728, '#45155165 sell 0.06'], [812, '#45155167 sell 0.08'], [956, '#45155169 sell stop 0.10']],
   c: '553,568,580,585b 531,549,580,588y 540,549,560,575b 522,527,560,565y 507,515,530,535y 497,503,515,522y 490,494,502,516y 483,492,495,560d 490,505,507,525d 497,506,512,518b 495,511,513,520d 511,511,560,565b 559,559,610,627b 590,595,611,618y 582,590,596,606y 585,588,602,605b 588,589,600,614y 579,588,617,628b 598,615,629,633b 628,628,681,686b 645,651,681,682y 646,652,667,674b 654,661,668,674y 642,646,660,684y 640,646,661,664b 642,660,681,686b 660,680,682,688d 670,680,682,692d 679,680,686,702b 675,684,686,694d 673,682,683,690d' },
 { t: 'NZDJPYm', q: '86.106 86.158 86.057 86.090', x: 1345, y: 376, w: 459, oy: 111, bottom: 593, v: [43, 235], times: ['15 Jan 2014', '16 Jan 03:00', '16 Jan 11:00', '16 Jan 19:00'], p: {}, lines: [[412, '#000']], dense: [481, 489, 497, 505, 513, 520],
   o: [[176, '#45155066 buy stop 0.14'], [254, '#45155063 buy stop 0.12'], [329, '#45155061 buy 0.10'], [404, '#45155059 buy 0.08'], [443, '#45155057 buy 0.06'], [466, '#45155055 buy 0.04', 99], [497, '#45155056 buy 0.04', 99], [521, '#45155058 buy 0.06'], [560, '#45155060 buy limit 0.08']],
   c: '300,309,309,318d 303,310,310,318d 300,314,314,322d 306,316,316,322d 310,318,318,324d 300,318,320,326d 305,316,316,322d 298,302,316,320y 292,300,301,310d 295,298,308,312b 306,308,314,318b 300,312,313,320d 304,311,316,322b 312,317,325,338b 315,324,325,333d 320,324,326,330d 318,322,327,335b 326,327,340,352b 336,341,348,356b 348,349,359,366b 334,347,359,359y 340,348,348,356d 320,325,347,348y 303,315,327,330y 312,316,317,326d 312,316,317,322d 305,314,316,354d 306,318,318,326d 310,316,318,326d' }
];

function draw(k) {
  const Y = z => Math.round((z - k.oy) / 3), R = k.w - 43, bot = Y(k.bottom), floor = Y(k.oy + 949), top = 2;
  let s = '';
  const rect = (x, y, w, h, f) => { s += `<rect x="${x}" y="${y}" width="${w}" height="${h}" fill="${f}"/>`; };
  const text = (x, yc, t, c = '', f = '') => { s += `<text x="${x}" y="${yc + 3}" class="${c}"${f ? ` style="fill:${f}"` : ''}>${t}</text>`; };
  const hd = (y, x = 3, dash = '9 6 2 6', col = '#2fd02f') => { s += `<path d="M${x} ${y + .5}H${R}" stroke="${col}" stroke-dasharray="${dash}"/>`; };
  (k.o || []).forEach(o => hd(Y(o[0] + 16), o[2] || 3));
  (k.dense || []).forEach(y => hd(Y(y), 99));
  (k.v).forEach(x => { s += `<path d="M${x + .5} ${top}V${floor}" stroke="#fff" stroke-dasharray="4 3"/>`; });
  k.lines.forEach(l => rect(3, Y(l[0]), R - 3, 1, l[1]));
  if (k.ea === 'sad') {
    const b = pts => { s += `<polyline points="${pts}" fill="none" stroke="#00f" stroke-dasharray="3 3"/>`; };
    b('67,56 131,81 211,114'); b('3,100 211,121'); b('3,117 221,124'); b('3,126 221,126'); b('99,148 221,128'); b('243,129 275,204'); b('247,129 262,167 275,204'); b('253,140 275,206');
  }
  (k.o || []).forEach(o => text(9, Y(o[0]), o[1]));
  k.c.split(' ').forEach((c, i) => {
    const t = c.slice(-1), [h, a, b, l] = c.slice(0, -1).split(',').map(v => Y(+v)), x = 3 + 8 * i;
    rect(x, h, 1, Math.max(1, l - h), '#fff');
    if (t === 'd') rect(x - 2, a, 5, Math.max(1, b - a), '#fff');
    else s += `<rect x="${x - 1.5}" y="${a + .5}" width="4" height="${Math.max(2, b - a)}" fill="${t === 'y' ? '#ffc800' : '#000'}" stroke="#fff"/>`;
  });
  if (k.ea === 'sad') s += '<path d="M231 119v11M227 127l4 3v-5M279 204v7M275 208l4 3v-5" stroke="#fff" stroke-width="3" fill="none"/><path d="M230.500 119v10M227.500 127l3 2v-4M278.500 204v7M275.500 209l3 2v-4" stroke="#f00" fill="none"/>';
  rect(0, 0, 2, 334, '#141414');
  s += `<path d="M2.500 ${bot + .5}V${top + .5}H${R + .5}V${bot + .5}Z" fill="none" stroke="#fff"/>`;
  if (k.bottom < 1010) s += `<path d="M2.500 ${bot + 3.5}H${R + .5}V${floor + .5}H2.500Z" fill="none" stroke="#fff"/>`;
  if (k.ea === 'sad') {
    rect(3, 304, R - 3, 1, '#a01818');
    [302, 306, 309, 312].forEach(y => hd(y, 3, '4 3', '#f7c0c8'));
    s += '<polyline points="3,305 20,307 50,306 90,307 110,310 150,311 160,314 175,315 190,313 220,313 226,304 250,303 255,302 264,302" fill="none" stroke="#ffc800"/>';
    text(7, 310, '1965 Zero Equity Balance 272.10 272.10');
    text(R + 6, 310, '4000.41'); rect(R + 2, 300, 41, 8, '#4682b4'); text(R + 6, 304, '272.100', 'k');
  }
  if (k.t === 'NZDJPYm') {
    text(6, Y(626), 'Exposure');
    [['Symbol', 'Deals', 'Buy lots', 'Buy price'], ['AUDJPYm', '11', '0.00', '0.000'], ['AUDUSDm', '11', '0.52', '0.89148'], ['NZDJPYm', '10', '0.44', '85.702'], ['NZDUSDm', '11', '0.00', '0.00000']]
      .forEach((r, i) => r.forEach((c, j) => text([13, 83, 133, 183][j], [185, 200, 214, 228, 242][i] + 1, c, 'mid')));
  }
  const hy = 10;
  s += `<path d="M7 ${hy - 1}h7l-3.500 4z" fill="#fff"/>`;
  text(18, hy + 1, `${k.t},H1`);
  text(k.t.includes('JPY') ? 80 : 85, hy + 1, k.q);
  if (k.note) {
    text(7, hy + 14, k.note); text(323, hy + 1, 'DONNYSOK V20');
    const m = k.ea === 'sad' ? 'M402 15q3.500-4 7 0' : 'M402 12q3.500 4 7 0';
    s += `<g fill="none" stroke="#fff"><circle cx="405.500" cy="12" r="5.500"/><path d="${m}M403.500 9v2M407.500 9v2"/></g>`;
  }
  if (k.mark || k.ea) { const x = k.w === 366 ? 258 : 330; s += `<path d="M${x - 4} 3h9l-4.500 5z" fill="${k.mark || '#000'}"/>`; }
  (k.big || []).forEach(b => text(b[0] + 1, Y(b[1]) + 2, b[2], 'big', b[3]));
  Object.entries(k.p).forEach(([y, t]) => { rect(R, Y(+y) + 1, 3, 1, '#fff'); text(R + 6, Y(+y), t); });
  (k.tags || []).forEach(g => { rect(R + 2, Y(g[0]) - 5, 41, 11, g[2]); text(R + 6, Y(g[0]), g[1], 'k'); });
  (k.times || ['16 Jan 2014', '16 Jan 13:00', '16 Jan 21:00', '17 Jan 05:00', '17 Jan 13:00']).forEach((t, i) => { rect(3 + 64 * i, floor, 1, 4, '#fff'); text(2 + 64 * i, floor + 9, t); });
  return `<svg width="${k.w}" height="334" role="img" aria-label="${k.t} chart">${s}</svg>`;
}

document.getElementById('mdi').innerHTML = charts.map(k =>
  `<section class="win ${k.active ? 'active' : ''}" style="left:${k.x}px;top:${k.y}px"><header>${use('chartwin')}<h3>${k.t},H1</h3>
   <button aria-label="Minimize"><svg width="11" height="10"><rect x=".5" y="5.500" width="10" height="3" fill="#fff" stroke="#555b6b"/></svg></button>
   <button aria-label="Maximize"><svg width="11" height="10"><path d="M1 1h9v8H1zM4 4h3v2H4z" fill="#fff" fill-rule="evenodd" stroke="#555b6b"/></svg></button>
   <button class="x" aria-label="Close"><svg width="11" height="10"><path d="M2 1.500l7 7M9 1.500l-7 7" stroke="#555b6b" stroke-width="4"/><path d="M2 1.500l7 7M9 1.500l-7 7" stroke="#fff" stroke-width="2"/></svg></button>
   </header><div class="client">${draw(k)}</div></section>`).join('');
```
